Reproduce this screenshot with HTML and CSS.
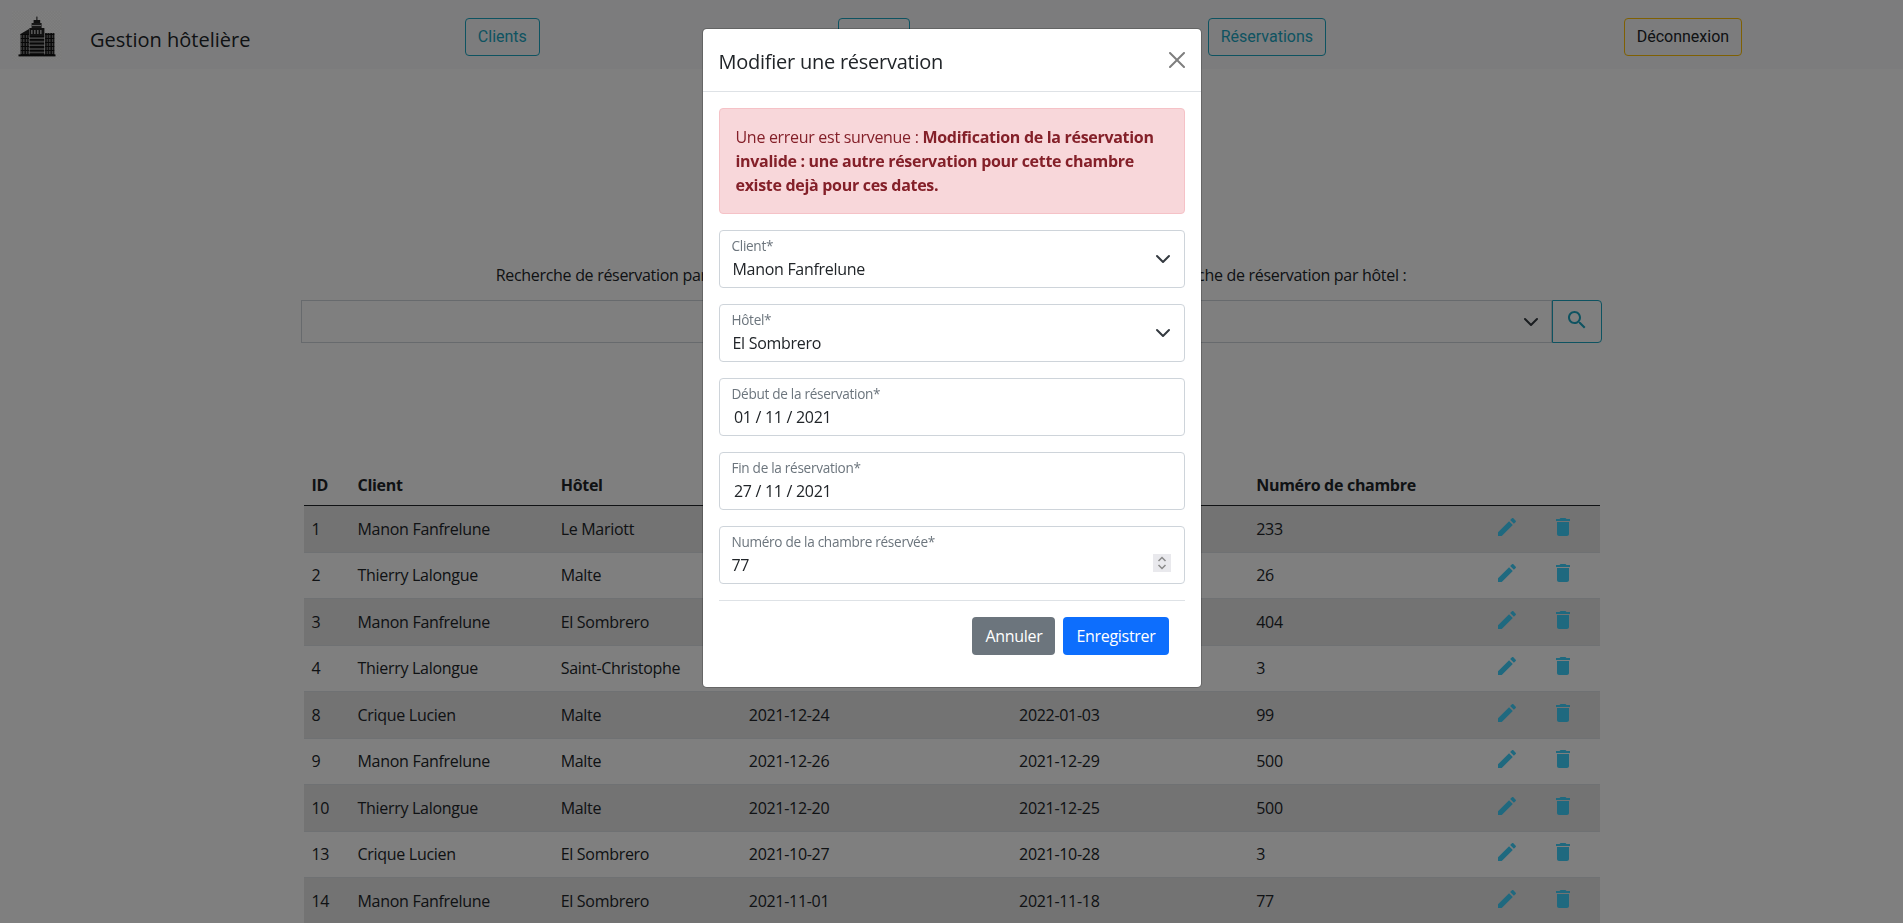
FILE: index.html
```html
<!DOCTYPE html>
<html lang="fr">
<head>
  <meta charset="utf-8">
  <title>Gestion hôtelière</title>
  <link rel="stylesheet" href="styles.css">
</head>
<body>

  <header class="navbar">
    <div class="brand">
      <svg class="logo" viewBox="0 0 50 50" width="50" height="50">
        <defs>
          <pattern id="dither" width="3" height="3" patternUnits="userSpaceOnUse">
            <rect width="3" height="3" fill="#f4f4f4"/>
            <rect width="1.5" height="1.5" fill="#fff"/>
            <rect x="1.5" y="1.5" width="1.5" height="1.5" fill="#fff"/>
          </pattern>
          <pattern id="floors" width="4" height="3.6" patternUnits="userSpaceOnUse">
            <rect width="4" height="3.6" fill="#111"/>
            <rect y="1.2" width="4" height="1.5" fill="#8c8c8c"/>
          </pattern>
          <pattern id="wings" width="2.6" height="4" patternUnits="userSpaceOnUse">
            <rect width="2.6" height="4" fill="#111"/>
            <rect x="1" y="0" width="1" height="3" fill="#999"/>
          </pattern>
        </defs>
        <rect width="50" height="50" fill="url(#dither)"/>
        <rect x="24.4" y="5.6" width="1" height="4" fill="#111"/>
        <rect x="21.6" y="9" width="6.6" height="3.4" fill="#222"/>
        <rect x="19.6" y="12" width="10" height="5.2" fill="#333"/>
        <rect x="20" y="14" width="9" height="1" fill="#bbb"/>
        <rect x="17.4" y="17" width="15" height="8" fill="#222"/>
        <rect x="19" y="19" width="1.6" height="4" fill="#aaa"/>
        <rect x="22" y="19" width="1.6" height="4" fill="#aaa"/>
        <rect x="25" y="19" width="1.6" height="4" fill="#aaa"/>
        <rect x="28" y="19" width="1.6" height="4" fill="#aaa"/>
        <polygon points="8.5,23 17,18 17,24 8.5,24" fill="#222"/>
        <rect x="8.5" y="23" width="8.5" height="21" fill="url(#wings)"/>
        <rect x="17.4" y="25" width="15" height="19" fill="url(#floors)"/>
        <rect x="33" y="22" width="9.5" height="22" fill="url(#wings)"/>
        <rect x="6.5" y="43.4" width="37" height="2" fill="#111"/>
      </svg>
      <span class="brand-name">Gestion hôtelière</span>
    </div>
    <nav class="nav-links">
      <a class="btn btn-info">Clients</a>
      <a class="btn btn-info">Hôtels</a>
      <a class="btn btn-info">Réservations</a>
      <a class="btn btn-warning">Déconnexion</a>
    </nav>
  </header>

  <main class="content">
    <h1 class="page-title">GESTION DES RÉSERVATIONS</h1>

    <div class="search">
      <div class="search-col">
        <label class="search-label">Recherche de réservation par client :</label>
        <div class="search-row">
          <div class="search-box"></div>
        </div>
      </div>
      <div class="search-col">
        <label class="search-label">Recherche de réservation par hôtel :</label>
        <div class="search-row">
          <div class="search-box search-select">
            <svg class="chevron" viewBox="0 0 16 16" width="16" height="16"><path d="M2 5l6 6 6-6" fill="none" stroke="#343a40" stroke-linecap="round" stroke-linejoin="round" stroke-width="2"/></svg>
          </div>
          <button class="search-btn">
            <svg viewBox="0 0 24 24" width="24" height="24"><path d="M15.5 14h-.79l-.28-.27C15.41 12.59 16 11.11 16 9.5 16 5.91 13.09 3 9.5 3S3 5.91 3 9.5 5.91 16 9.5 16c1.61 0 3.09-.59 4.23-1.57l.27.28v.79l5 4.99L20.49 19l-4.99-5zm-6 0C7.01 14 5 11.99 5 9.5S7.01 5 9.5 5 14 7.01 14 9.5 11.99 14 9.5 14z"/></svg>
          </button>
        </div>
      </div>
    </div>

    <table class="table">
      <colgroup>
        <col class="col-id"><col class="col-client"><col class="col-hotel"><col class="col-start">
        <col class="col-end"><col class="col-room"><col class="col-action"><col class="col-action">
      </colgroup>
      <thead>
        <tr><th>ID</th><th>Client</th><th>Hôtel</th><th>Début</th><th>Fin</th><th>Numéro de chambre</th><th></th><th></th></tr>
      </thead>
      <tbody>
        <tr><td>1</td><td>Manon Fanfrelune</td><td>Le Mariott</td><td></td><td></td><td>233</td>
          <td><svg class="icon" viewBox="0 0 24 24"><use href="#pen"/></svg></td><td><svg class="icon" viewBox="0 0 24 24"><use href="#bin"/></svg></td></tr>
        <tr><td>2</td><td>Thierry Lalongue</td><td>Malte</td><td></td><td></td><td>26</td>
          <td><svg class="icon" viewBox="0 0 24 24"><use href="#pen"/></svg></td><td><svg class="icon" viewBox="0 0 24 24"><use href="#bin"/></svg></td></tr>
        <tr><td>3</td><td>Manon Fanfrelune</td><td>El Sombrero</td><td></td><td></td><td>404</td>
          <td><svg class="icon" viewBox="0 0 24 24"><use href="#pen"/></svg></td><td><svg class="icon" viewBox="0 0 24 24"><use href="#bin"/></svg></td></tr>
        <tr><td>4</td><td>Thierry Lalongue</td><td>Saint-Christophe</td><td></td><td></td><td>3</td>
          <td><svg class="icon" viewBox="0 0 24 24"><use href="#pen"/></svg></td><td><svg class="icon" viewBox="0 0 24 24"><use href="#bin"/></svg></td></tr>
        <tr><td>8</td><td>Crique Lucien</td><td>Malte</td><td>2021-12-24</td><td>2022-01-03</td><td>99</td>
          <td><svg class="icon" viewBox="0 0 24 24"><use href="#pen"/></svg></td><td><svg class="icon" viewBox="0 0 24 24"><use href="#bin"/></svg></td></tr>
        <tr><td>9</td><td>Manon Fanfrelune</td><td>Malte</td><td>2021-12-26</td><td>2021-12-29</td><td>500</td>
          <td><svg class="icon" viewBox="0 0 24 24"><use href="#pen"/></svg></td><td><svg class="icon" viewBox="0 0 24 24"><use href="#bin"/></svg></td></tr>
        <tr><td>10</td><td>Thierry Lalongue</td><td>Malte</td><td>2021-12-20</td><td>2021-12-25</td><td>500</td>
          <td><svg class="icon" viewBox="0 0 24 24"><use href="#pen"/></svg></td><td><svg class="icon" viewBox="0 0 24 24"><use href="#bin"/></svg></td></tr>
        <tr><td>13</td><td>Crique Lucien</td><td>El Sombrero</td><td>2021-10-27</td><td>2021-10-28</td><td>3</td>
          <td><svg class="icon" viewBox="0 0 24 24"><use href="#pen"/></svg></td><td><svg class="icon" viewBox="0 0 24 24"><use href="#bin"/></svg></td></tr>
        <tr><td>14</td><td>Manon Fanfrelune</td><td>El Sombrero</td><td>2021-11-01</td><td>2021-11-18</td><td>77</td>
          <td><svg class="icon" viewBox="0 0 24 24"><use href="#pen"/></svg></td><td><svg class="icon" viewBox="0 0 24 24"><use href="#bin"/></svg></td></tr>
      </tbody>
    </table>

    <svg class="sprites" width="0" height="0">
      <symbol id="pen" viewBox="0 0 24 24"><path d="M3 17.25V21h3.75L17.81 9.94l-3.75-3.75L3 17.25zM20.71 7.04c.39-.39.39-1.02 0-1.41l-2.34-2.34c-.39-.39-1.02-.39-1.41 0l-1.83 1.83 3.75 3.75 1.83-1.83z"/></symbol>
      <symbol id="bin" viewBox="0 0 24 24"><path d="M6 19c0 1.1.9 2 2 2h8c1.1 0 2-.9 2-2V7H6v12zM19 4h-3.5l-1-1h-5l-1 1H5v2h14V4z"/></symbol>
    </svg>
  </main>

  <!-- Edit dialog -->
  <div class="backdrop">
    <div class="modal">
      <div class="modal-header">
        <h5 class="modal-title">Modifier une réservation</h5>
        <svg class="close" viewBox="0 0 16 16" width="16" height="16"><path d="M.293.293a1 1 0 011.414 0L8 6.586 14.293.293a1 1 0 111.414 1.414L9.414 8l6.293 6.293a1 1 0 01-1.414 1.414L8 9.414l-6.293 6.293a1 1 0 01-1.414-1.414L6.586 8 .293 1.707a1 1 0 010-1.414z"/></svg>
      </div>
      <div class="modal-body">
        <div class="alert">Une erreur est survenue : <strong>Modification de la réservation invalide : une autre réservation pour cette chambre existe dejà pour ces dates.</strong></div>

        <div class="field">
          <div class="field-text">
            <div class="field-label">Client*</div>
            <div class="field-value">Manon Fanfrelune</div>
          </div>
          <svg class="chevron" viewBox="0 0 16 16" width="16" height="16"><path d="M2 5l6 6 6-6" fill="none" stroke="#343a40" stroke-linecap="round" stroke-linejoin="round" stroke-width="2"/></svg>
        </div>
        <div class="field">
          <div class="field-text">
            <div class="field-label">Hôtel*</div>
            <div class="field-value">El Sombrero</div>
          </div>
          <svg class="chevron" viewBox="0 0 16 16" width="16" height="16"><path d="M2 5l6 6 6-6" fill="none" stroke="#343a40" stroke-linecap="round" stroke-linejoin="round" stroke-width="2"/></svg>
        </div>
        <div class="field">
          <div class="field-text">
            <div class="field-label">Début de la réservation*</div>
            <div class="field-value field-date">01 / 11 / 2021</div>
          </div>
        </div>
        <div class="field">
          <div class="field-text">
            <div class="field-label">Fin de la réservation*</div>
            <div class="field-value field-date">27 / 11 / 2021</div>
          </div>
        </div>
        <div class="field">
          <div class="field-text">
            <div class="field-label">Numéro de la chambre réservée*</div>
            <div class="field-value field-number">77</div>
          </div>
          <svg class="spinner" viewBox="0 0 18 18" width="18" height="18">
            <rect width="18" height="18" fill="#e9e9ed"/>
            <path d="M5.5 7l3.5-3.5L12.500 7M5.500 11l3.500 3.500 3.500-3.500" fill="none" stroke="#8a8a8a" stroke-width="1.500"/>
          </svg>
        </div>

        <hr class="divider">

        <div class="modal-actions">
          <button class="action action-cancel">Annuler</button>
          <button class="action action-save">Enregistrer</button>
        </div>
      </div>
    </div>
  </div>

</body>
</html>
```

FILE: styles.css
```css
html, body {
  height: 100%;
  overflow: hidden;
}
body {
  margin: 0;
  background: #fff;
  color: #212529;
  font-family: "Open Sans", "Noto Sans", sans-serif;
  font-size: 16px;
  line-height: 24px;
  letter-spacing: -0.3px;
}

/* Top bar */
.navbar {
  display: flex;
  align-items: flex-start;
  height: 69px;
  box-sizing: border-box;
  padding: 11px 12px 0;
  background: #f8f9fa;
}
.brand {
  display: flex;
  align-items: flex-start;
  width: 304px;
}
.logo {
  display: block;
}
.brand-name {
  margin: 14px 0 0 28px;
  font-size: 20px;
  line-height: 30px;
  font-weight: 500;
  letter-spacing: 0;
}
.nav-links {
  display: flex;
  flex: 1;
  justify-content: space-around;
  margin-top: 7px;
}
.btn {
  padding: 6px 12px;
  border: 1px solid;
  border-radius: 4px;
  font-family: Roboto, sans-serif;
  letter-spacing: 0;
}
.btn-info {
  border-color: #1ca6c2;
  color: #1ca6c2;
}
.btn-warning {
  border-color: #ffc107;
  color: #212529;
}

/* Page */
.content {
  width: 1301px;
  margin: 0 auto;
}
.page-title {
  margin: 116px 0 30px;
  font-size: 32px;
  line-height: 48px;
  font-weight: 300;
  text-align: center;
}
.search {
  display: flex;
}
.search-col {
  flex: 1;
  text-align: center;
}
.search-label {
  display: block;
  margin-bottom: 13px;
}
.search-row {
  display: flex;
  height: 43px;
}
.search-box {
  flex: 1;
  border: 1px solid #ced4da;
}
.search-select {
  display: flex;
  align-items: center;
  justify-content: flex-end;
  padding-right: 12px;
}
.search-btn {
  display: flex;
  align-items: center;
  justify-content: center;
  width: 50px;
  padding: 0 0 4px;
  background: none;
  border: 1px solid #1ca6c2;
  border-radius: 0 4px 4px 0;
  fill: #1ca6c2;
}

/* Table */
.table {
  width: 1296px;
  margin: 122px auto 0;
  border-collapse: collapse;
  table-layout: fixed;
}
.col-id { width: 46px; }
.col-client { width: 203px; }
.col-hotel { width: 188px; }
.col-start { width: 270px; }
.col-end { width: 237px; }
.col-room { width: 239px; }
.col-action { width: 56px; }
.table th {
  padding: 8px;
  text-align: left;
  font-weight: 700;
  border-bottom: 1px solid #212529;
}
.table td {
  height: 46.5px;
  box-sizing: border-box;
  padding: 0 8px;
  border-bottom: 1px solid #dee2e6;
}
.table tbody tr:nth-child(odd) {
  background: #e6e6e6;
}
.icon {
  display: block;
  width: 24px;
  height: 24px;
  margin-top: -4px;
  fill: #3fd3ff;
}
.sprites {
  position: absolute;
}

/* Modal */
.backdrop {
  position: fixed;
  top: 0;
  left: 0;
  width: 100%;
  height: 100%;
  background: rgba(0, 0, 0, .5);
}
.modal {
  width: 500px;
  box-sizing: border-box;
  margin: 28px auto 0;
  background: #fff;
  border: 1px solid rgba(0, 0, 0, .2);
  border-radius: 4.8px;
  background-clip: padding-box;
}
.modal-header {
  display: flex;
  align-items: center;
  justify-content: space-between;
  padding: 16px;
  border-bottom: 1px solid #dee2e6;
}
.modal-title {
  margin: 2px 0 -2px;
  font-size: 20px;
  line-height: 30px;
  font-weight: 400;
  letter-spacing: -0.25px;
}
.close {
  opacity: .5;
}
.modal-body {
  padding: 16px 16px 32px;
}
.alert {
  margin-bottom: 16px;
  padding: 16px;
  background: #f8d7da;
  border: 1px solid #f5c2c7;
  border-radius: 4px;
  color: #842029;
}
.field {
  display: flex;
  align-items: center;
  height: 58px;
  box-sizing: border-box;
  margin-bottom: 16px;
  padding: 0 13px 0 12px;
  border: 1px solid #ced4da;
  border-radius: 4px;
}
.field-text {
  flex: 1;
}
.field-label {
  font-size: 13.6px;
  line-height: 18px;
  color: #6c757d;
}
.field-value {
  margin: 2px 0 0 1px;
}
.field-date {
  margin-left: 2.5px;
}
.field-number {
  margin-left: 0;
}
.spinner {
  margin-top: 16px;
}
.divider {
  margin: 0 0 16px;
  border: 0;
  border-top: 1px solid #dee2e6;
}
.modal-actions {
  display: flex;
  justify-content: flex-end;
  gap: 8px;
  padding-right: 16px;
}
.action {
  height: 38px;
  padding: 0 13px;
  border: 0;
  border-radius: 4px;
  color: #fff;
  font: inherit;
  letter-spacing: inherit;
}
.action-cancel {
  background: #6c757d;
}
.action-save {
  background: #0d6efd;
}
```
